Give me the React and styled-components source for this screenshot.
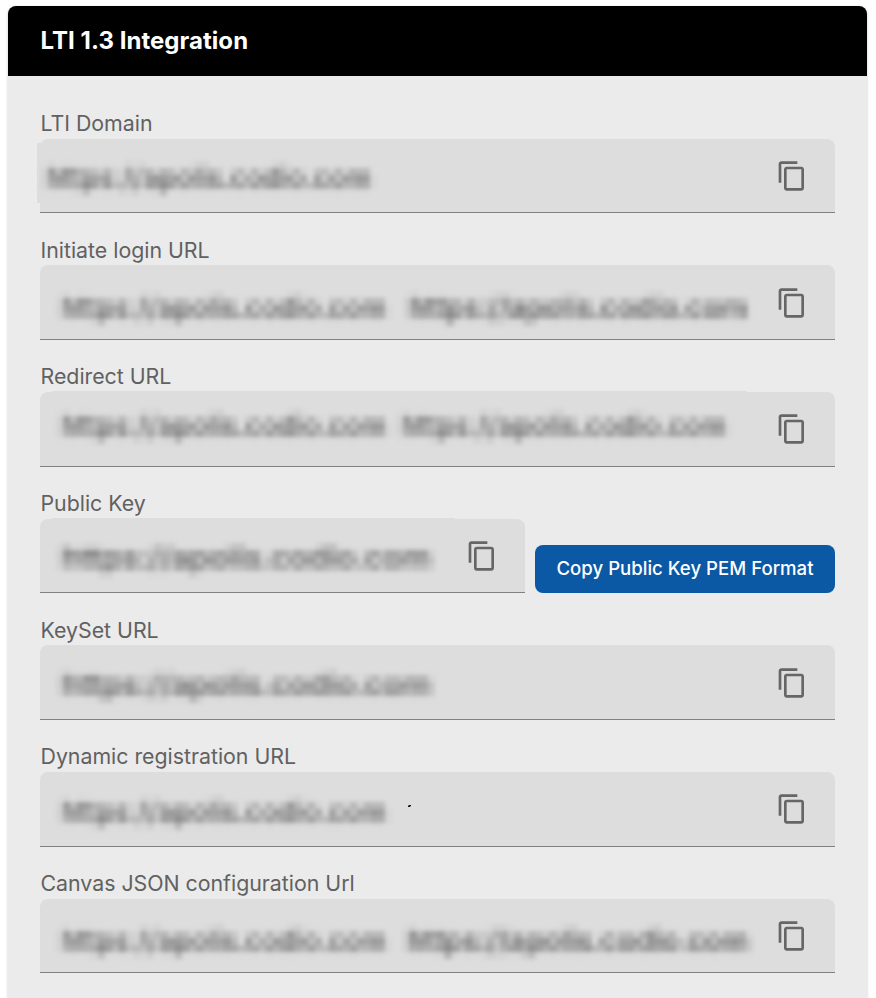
import React from "react";
import styled, { createGlobalStyle } from "styled-components";

const GlobalStyle = createGlobalStyle`
  * { box-sizing: border-box; }
  html, body { margin: 0; height: 998px; overflow: hidden; background: #fff; }
  body { font-family: Inter, "Liberation Sans", sans-serif; }
`;

const Page = styled.main`
  width: 876px;
  height: 998px;
  padding: 6px 9px 0 8px;
  overflow: hidden;
`;

const Panel = styled.section`
  height: 1040px;
  border-radius: 8px;
  background: #ebebeb;
  box-shadow: 0 1px 3px rgba(0, 0, 0, 0.22);
`;

const Header = styled.header`
  height: 70px;
  padding: 0 32.5px;
  display: flex;
  align-items: center;
  border-radius: 8px 8px 0 0;
  background: #000;
  color: #fff;
`;

const Title = styled.h1`
  margin: 0;
  font-size: 24px;
  line-height: 32px;
  font-weight: 700;
  letter-spacing: 0.04px;
`;

const Fields = styled.div`
  padding: 10.63px 32px 0;
`;

const Group = styled.div`
  height: 126.667px;
`;

const Label = styled.div`
  height: 52.12px;
  padding: 23.3px 0 0 0.5px;
  font-size: 21.33px;
  line-height: 27px;
  letter-spacing: -0.01px;
  color: #616161;
`;

const Line = styled.div`
  display: flex;
  align-items: flex-end;
  gap: 10px;
`;

const Box = styled.div`
  flex: 1;
  min-width: 0;
  height: 74.55px;
  padding-right: 27px;
  display: flex;
  align-items: center;
  justify-content: space-between;
  border-bottom: 1px solid #808080;
  border-radius: 8px 8px 0 0;
  background: #ddd;
`;

const Values = styled.div`
  align-self: flex-start;
  display: flex;
  height: 60px;
  margin-left: ${(p) => p.$left}px;
  margin-top: ${(p) => p.$top}px;
  background: #ddd;
`;

const Redacted = styled.span`
  flex: none;
  width: ${(p) => p.$width}px;
  padding-left: 9px;
  font-size: 28px;
  font-weight: 500;
  line-height: ${(p) => p.$line || 71}px;
  white-space: nowrap;
  color: #545454;
  filter: url(#mosaic);
  transform: scaleX(${(p) => p.$stretch || 1});
  transform-origin: 0 0;
`;

const FilterDefs = styled.svg`
  display: block;
  width: 0;
  height: 0;
`;

const Speck = styled.svg`
  flex: none;
  margin: 28px 0 0 9px;
`;

const CopyButton = styled.button`
  flex: none;
  width: 32px;
  height: 32px;
  padding: 0;
  border: 0;
  margin-top: 1px;
  background: none;
  color: #666;
  svg { display: block; }
`;

const PemButton = styled.button`
  flex: none;
  width: 300px;
  height: 48px;
  padding: 0 0 1px;
  border: 0;
  border-radius: 8px;
  background: #0b58a5;
  color: #fff;
  font: 500 18.6px/47px Inter, sans-serif;
`;

const CopyIcon = () => (
  <svg width="32" height="32" viewBox="0 0 24 24" fill="currentColor">
    <path d="M16 1H4c-1.1 0-2 .9-2 2v14h2V3h12V1zm3 4H8c-1.1 0-2 .9-2 2v14c0 1.1.9 2 2 2h11c1.1 0 2-.9 2-2V7c0-1.1-.9-2-2-2zm0 16H8V7h11v14z" />
  </svg>
);

// Samples the softened text once per 7px cell, grows each sample to fill its cell, then smooths the edges.
const MosaicFilter = () => (
  <FilterDefs aria-hidden="true">
    <filter id="mosaic" x="-10" y="-10" width="420" height="100" filterUnits="userSpaceOnUse" colorInterpolationFilters="sRGB">
      <feGaussianBlur in="SourceGraphic" stdDeviation="2.6" result="soft" />
      <feFlood x="0" y="0" width="1" height="1" floodColor="#000" result="dot" />
      <feOffset in="dot" dx="0" dy="0" x="-3" y="-3" width="7" height="7" result="cell" />
      <feTile in="cell" result="grid" />
      <feComposite in="soft" in2="grid" operator="in" result="samples" />
      <feMorphology in="samples" operator="dilate" radius="3" result="blocks" />
      <feGaussianBlur in="blocks" stdDeviation="2" />
    </filter>
  </FilterDefs>
);

const HOST = "https://apolis.codio.com";

const FIELDS = [
  { label: "LTI Domain", left: -3, top: 4, values: [{ width: 349 }] },
  { label: "Initiate login URL", left: 12, top: 8, values: [{ width: 348 }, { width: 347, stretch: 1.038 }] },
  { label: "Redirect URL", left: 12, top: -1, values: [{ width: 340 }, { width: 355 }] },
  { label: "Public Key", left: 12, top: -1, values: [{ width: 403, stretch: 1.132, line: 80 }], pem: true },
  { label: "KeySet URL", left: 12, top: 5, values: [{ width: 394, stretch: 1.132 }] },
  { label: "Dynamic registration URL", left: 12, top: 5, values: [{ width: 347 }], speck: true },
  { label: "Canvas JSON configuration Url", left: 12, top: 7, values: [{ width: 346 }, { width: 350, stretch: 1.048 }] },
];

export default function App() {
  return (
    <>
      <GlobalStyle />
      <MosaicFilter />
      <Page>
        <Panel>
          <Header><Title>LTI 1.3 Integration</Title></Header>
          <Fields>
            {FIELDS.map((f) => (
              <Group key={f.label}>
                <Label>{f.label}</Label>
                <Line>
                  <Box>
                    <Values $left={f.left} $top={f.top}>
                      {f.values.map((v, i) => (
                        <Redacted key={i} $width={v.width} $stretch={v.stretch} $line={v.line}>{HOST}</Redacted>
                      ))}
                      {f.speck && (
                        <Speck width="3" height="2" viewBox="0 0 3 2"><path d="M0 2V0.6H1V0H3V1.2H2V2Z" fill="#111" /></Speck>
                      )}
                    </Values>
                    <CopyButton aria-label={`Copy ${f.label}`}><CopyIcon /></CopyButton>
                  </Box>
                  {f.pem && <PemButton>Copy Public Key PEM Format</PemButton>}
                </Line>
              </Group>
            ))}
          </Fields>
        </Panel>
      </Page>
    </>
  );
}
